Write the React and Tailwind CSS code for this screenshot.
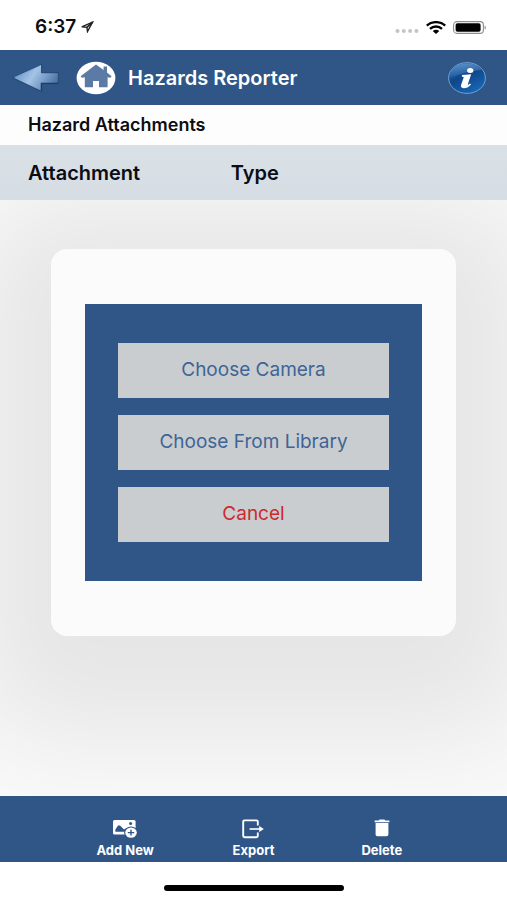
import React from "react";

const LocationIcon = () => (
  <svg width="14" height="12" viewBox="0 0 14 12" fill="none" stroke="#222" strokeWidth="1.4" strokeLinejoin="miter">
    <path d="M12.6 1.1 L1.8 5.9 L6.9 6.3 L7.5 10.5 Z" />
    <path d="M12.6 1.1 L6.9 6.3" strokeWidth="1.6" />
  </svg>
);

const SignalDots = () => (
  <svg width="24" height="6" viewBox="0 0 24 6" fill="#c4c4c4">
    <circle cx="2.5" cy="3" r="2" />
    <circle cx="8.8" cy="3" r="2" />
    <circle cx="15.1" cy="3" r="2" />
    <circle cx="21.4" cy="3" r="2" />
  </svg>
);

const WifiIcon = () => (
  <svg width="20" height="13" viewBox="0 0 20 13" fill="none" stroke="#000" strokeWidth="2.4">
    <path d="M0.8 4.6 C6 0 14 0 19.2 4.6" />
    <path d="M4 7.8 C7.4 4.7 12.6 4.7 16 7.8" />
    <path d="M6.7 10 C8.7 8.3 11.3 8.3 13.3 10 L10 12.9 Z" fill="#000" stroke="none" />
  </svg>
);

const BatteryIcon = () => (
  <svg width="34" height="13" viewBox="0 0 34 13">
    <rect x="0.6" y="0.6" width="29.8" height="11.8" rx="3.4" fill="#fff" stroke="#8d8d8d" strokeWidth="1.1" />
    <rect x="2.6" y="2.3" width="25" height="8.4" rx="1.8" fill="#000" />
    <path d="M31.6 4.4 C33.3 5 33.3 8 31.6 8.6 Z" fill="#8d8d8d" />
  </svg>
);

const BackIcon = () => (
  <svg width="48" height="30" viewBox="0 0 48 30">
    <defs>
      <linearGradient id="back" x1="0" y1="0.2" x2="1" y2="0.6">
        <stop offset="0" stopColor="#5f8cc4" />
        <stop offset="0.45" stopColor="#a4c3e6" />
        <stop offset="0.7" stopColor="#7a9fca" />
        <stop offset="1" stopColor="#44709f" />
      </linearGradient>
    </defs>
    <path
      d="M1 15 L29.6 1.4 V9.6 H46.4 V20.6 H29.6 V28.6 Z"
      fill="url(#back)"
      stroke="#294b74"
      strokeWidth="1.1"
    />
    <path d="M29.4 28 V20.4 H46" fill="none" stroke="#1f3c61" strokeWidth="1.3" />
    <path d="M2.5 14.6 L29 2.4" stroke="#8db4e0" strokeWidth="0.9" />
  </svg>
);

const HomeIcon = () => (
  <svg width="40" height="34" viewBox="0 0 40 34">
    <ellipse cx="20" cy="17" rx="19.4" ry="16.2" fill="#fff" />
    <path
      d="M20 3.4 L4.6 15.2 L5.8 16.8 L8.8 16.2 V26.2 H17 V20 H23 V26.2 H31.6 V16.2 L34.4 16.8 L35.6 15.2 L31 11.6 V5.4 H27.6 V9 Z"
      fill="#5b7ba6"
    />
  </svg>
);

const InfoIcon = () => (
  <svg width="40" height="34" viewBox="0 0 40 34">
    <defs>
      <linearGradient id="ball" x1="0" y1="0" x2="0.6" y2="1">
        <stop offset="0" stopColor="#2f76bc" />
        <stop offset="0.5" stopColor="#0f4688" />
        <stop offset="1" stopColor="#1765b4" />
      </linearGradient>
      <linearGradient id="shine" x1="0" y1="0" x2="0" y2="1">
        <stop offset="0" stopColor="#8fbbe4" stopOpacity="0.5" />
        <stop offset="1" stopColor="#5d9ad6" stopOpacity="0.15" />
      </linearGradient>
    </defs>
    <ellipse cx="20" cy="17" rx="18.4" ry="15.4" fill="url(#ball)" stroke="#6f9fd0" strokeWidth="1" />
    <path d="M2.6 17 C2.6 8 10 2.4 20 2.4 C27 2.4 32 5 34.8 9 C26 9 14 13 2.6 17 Z" fill="url(#shine)" />
    <ellipse cx="23.2" cy="9.4" rx="3.2" ry="2.5" fill="#fff" />
    <path
      d="M15 14 L24.2 13.2 L20.8 23.2 C20.6 24.2 21.4 24 23 22.4 L24 23.4 C21.6 26 19.4 27.2 16.8 27.2 C14.4 27.2 13.4 25.8 14.2 23.6 L16.6 16.8 C16.8 16 16.4 15.8 14.8 15.8 Z"
      fill="#fff"
    />
  </svg>
);

const AddImageIcon = () => (
  <svg width="26" height="20" viewBox="0 0 26 20">
    <rect x="1" y="1" width="22.6" height="14.6" rx="1.6" fill="#fff" />
    <path d="M3.4 12.8 V10.4 L6 6.6 H8 L12 10.4 L14.4 9 V12.8 Z" fill="#2f5687" />
    <circle cx="18.6" cy="4.6" r="1.5" fill="#2f5687" />
    <ellipse cx="19" cy="13.6" rx="6.9" ry="6.2" fill="#2f5687" />
    <ellipse cx="19" cy="13.6" rx="5.8" ry="5.2" fill="#fff" />
    <path d="M19 10.8 V16.4 M15.8 13.6 H22.2" stroke="#2f5687" strokeWidth="1.4" />
  </svg>
);

const ExportIcon = () => (
  <svg width="22" height="20" viewBox="0 0 22 20" fill="none" stroke="#fff">
    <path
      d="M15.8 6.4 V2.6 Q15.8 1.4 14.4 1.4 H2.6 Q1.2 1.4 1.2 2.6 V17 Q1.2 18.2 2.6 18.2 H14.4 Q15.8 18.2 15.8 17 V13.6"
      strokeWidth="1.9"
    />
    <path d="M7.6 10 H18" strokeWidth="1.6" />
    <path d="M17.2 6.9 L21.8 10 L17.2 13.1 Z" fill="#fff" stroke="none" />
  </svg>
);

const TrashIcon = () => (
  <svg width="16" height="18" viewBox="0 0 16 18" fill="#fff">
    <path d="M0.6 1.6 H4.6 L5.6 0.6 H10.4 L11.4 1.6 H15.4 V3.2 H0.6 Z" />
    <path d="M1.6 4 H14.4 V15.6 Q14.4 17.2 12.6 17.2 H3.4 Q1.6 17.2 1.6 15.6 Z" />
  </svg>
);

const App = () => {
  const choices = [
    { label: "Choose Camera", color: "text-[#3f6496]" },
    { label: "Choose From Library", color: "text-[#3f6496]" },
    { label: "Cancel", color: "text-[#cc2a2c]" },
  ];

  const actions = [
    { label: "Add New", icon: <AddImageIcon /> },
    { label: "Export", icon: <ExportIcon /> },
    { label: "Delete", icon: <TrashIcon /> },
  ];

  return (
    <div className="min-h-screen flex flex-col bg-white text-[#0b0d12] font-['Inter',sans-serif]">
      {/* Status bar */}
      <div className="h-[50px] pl-[35px] pr-5 pt-1 flex items-center justify-between">
        <div className="flex items-center gap-1">
          <span className="text-[19px] font-semibold">6:37</span>
          <LocationIcon />
        </div>
        <div className="flex items-center gap-[7px]">
          <span className="pt-2">
            <SignalDots />
          </span>
          <WifiIcon />
          <BatteryIcon />
        </div>
      </div>

      {/* Header */}
      <header className="h-[55px] pl-3 pr-5 flex items-center bg-[#2f5687] text-white">
        <button aria-label="Back">
          <BackIcon />
        </button>
        <button aria-label="Home" className="ml-4">
          <HomeIcon />
        </button>
        <h1 className="ml-3 flex-1 text-xl font-semibold">Hazards Reporter</h1>
        <button aria-label="Info">
          <InfoIcon />
        </button>
      </header>

      <h2 className="h-10 px-7 flex items-center text-lg font-semibold bg-[#fdfdfd]">
        Hazard Attachments
      </h2>

      {/* Attachment list */}
      <table className="w-full table-fixed text-left bg-linear-to-b from-[#dae1e6] to-[#d5dce3]">
        <thead>
          <tr className="h-[55px] text-xl">
            <th className="w-2/5 pl-7 font-semibold">Attachment</th>
            <th className="pl-7 font-semibold">Type</th>
          </tr>
        </thead>
      </table>

      {/* Source picker */}
      <main className="flex-1 pt-[49px] overflow-hidden bg-[#f9f9f9]">
        <div className="w-4/5 mx-auto py-[55px] rounded-2xl bg-[#fbfbfb] shadow-[0_27px_110px_72px_rgba(0,0,0,0.08)]">
          <div className="w-5/6 mx-auto py-[39px] flex flex-col items-center gap-[17px] bg-[#2f5687]">
            {choices.map((choice) => (
              <button
                key={choice.label}
                className={`w-4/5 h-[55px] bg-[#c9cdd0] text-[19px] ${choice.color}`}
              >
                {choice.label}
              </button>
            ))}
          </div>
        </div>
      </main>

      {/* Bottom actions */}
      <footer className="h-[66px] px-[61px] pt-[23px] grid grid-cols-3 bg-[#2f5687] text-white">
        {actions.map((action) => (
          <button key={action.label} className="flex flex-col items-center">
            <span className="h-[22px] flex items-start">{action.icon}</span>
            <span className="text-[13px] font-bold">{action.label}</span>
          </button>
        ))}
      </footer>

      <div className="h-[38px] pt-[23px]">
        <div className="w-[180px] h-1.5 mx-auto rounded-full bg-black" />
      </div>
    </div>
  );
};

export default App;
